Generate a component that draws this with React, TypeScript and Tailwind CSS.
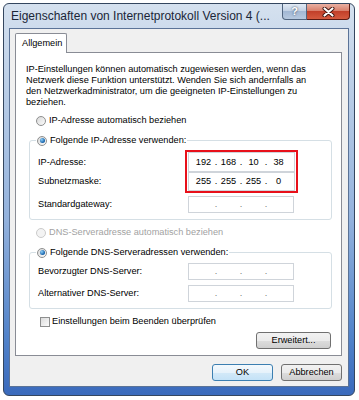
import { Fragment } from 'react';

const font = "font-['Liberation_Sans',Arial,sans-serif]";

function Radio({ checked = false, disabled = false }: { checked?: boolean; disabled?: boolean }) {
  return (
    <span
      className={`flex-shrink-0 w-[10px] h-[10px] rounded-full border flex items-center justify-center ${
        disabled
          ? 'border-[#cbcbcb] bg-[#f3f3f3]'
          : 'border-[#8e8f8f] bg-gradient-to-br from-[#d9d9d9] to-[#fbfbfb]'
      }`}
    >
      {checked && (
        <span className="w-[5px] h-[5px] rounded-full bg-[radial-gradient(circle_at_35%_35%,#8fd0f8,#0f5da8_70%)]" />
      )}
    </span>
  );
}

function Checkbox() {
  return (
    <span className="flex-shrink-0 w-[10px] h-[10px] border border-[#8e8f8f] bg-gradient-to-br from-[#dcdcdc] to-[#fbfbfb]" />
  );
}

function IpField({ parts, className = '' }: { parts?: string[]; className?: string }) {
  return (
    <div className={`flex items-center bg-white border border-[#cfd4da] pl-[4px] ${className}`}>
      {[0, 1, 2, 3].map((i) => (
        <Fragment key={i}>
          <span className="w-[21px] text-center">{parts ? parts[i] : ''}</span>
          {i < 3 && <span className={`w-[4px] text-center ${parts ? '' : 'text-[#777]'}`}>.</span>}
        </Fragment>
      ))}
    </div>
  );
}

function Button({ label, primary = false, className = '' }: { label: string; primary?: boolean; className?: string }) {
  return (
    <button
      className={`h-[17px] rounded-[3px] border flex items-center justify-center text-black ${
        primary
          ? 'border-[#3c7fb1] bg-[linear-gradient(180deg,#f4f9fd_0%,#e6f2fb_50%,#d3e9f8_51%,#c4e2f7_100%)]'
          : 'border-[#707070] bg-[linear-gradient(180deg,#f2f2f2_0%,#ebebeb_50%,#dddddd_51%,#cfcfcf_100%)]'
      } ${className}`}
    >
      {label}
    </button>
  );
}

export default function App() {
  return (
    <div className={`w-[359px] h-[400px] bg-white pt-[3px] pl-[3px] ${font} text-[9.2px] leading-[11px] text-black`}>
      {/* Window frame */}
      <div className="w-[352px] h-[393px] rounded-[6px] border border-[#34465f] bg-[linear-gradient(180deg,#d5e1ef_0%,#bccfe7_20%,#93b2dd_55%,#5283ca_85%,#3a6abc_100%)] flex flex-col px-[5px] pb-[8px]">
        {/* Title bar */}
        <div className="h-[24px] flex items-start -mr-[1px]">
          <div className="flex-1 self-center pl-[2px] text-[12px] leading-[14px] text-[#1b2638] whitespace-nowrap">
            Eigenschaften von Internetprotokoll Version 4 (...
          </div>
          <div className="flex">
            <div className="w-[25px] h-[16px] rounded-bl-[4px] border border-t-0 border-[#51657f] bg-[linear-gradient(180deg,#e2eaf4_0%,#c3d2e5_45%,#a3b8d4_50%,#b7c9df_100%)] flex items-center justify-center text-white font-bold text-[11px] leading-none [text-shadow:0_0_2px_#1d2c44]">
              ?
            </div>
            <div className="w-[43px] h-[16px] rounded-br-[4px] border border-t-0 border-l-0 border-[#5a1a12] bg-[linear-gradient(180deg,#eab0a2_0%,#d9806c_45%,#c2402a_50%,#d55a3f_100%)] flex items-center justify-center">
              <svg width="13" height="10" viewBox="0 0 13 10">
                <path d="M2.5 1.5 L10.5 8.5 M10.5 1.5 L2.5 8.5" stroke="#3d120c" strokeWidth="4" strokeLinecap="round" />
                <path d="M2.5 1.5 L10.5 8.5 M10.5 1.5 L2.5 8.5" stroke="#ffffff" strokeWidth="2.2" strokeLinecap="round" />
              </svg>
            </div>
          </div>
        </div>

        {/* Client area */}
        <div className="flex-1 bg-[#f0f0f0] border border-[#5b7397] pt-[4px] pl-[5px] pr-[6px] pb-[4px] flex flex-col">
          {/* Tab strip */}
          <div className="flex">
            <div className="relative z-10 -mb-px h-[20px] w-[52px] bg-white border border-b-0 border-[#898c95] rounded-t-[2px] flex items-center pl-[6px]">
              Allgemein
            </div>
          </div>

          {/* Tab panel */}
          <div className="bg-white border border-[#898c95] flex flex-col pb-[6px]">
            <p className="pt-[11px] pl-[10px] whitespace-nowrap">
              IP-Einstellungen können automatisch zugewiesen werden, wenn das
              <br />
              Netzwerk diese Funktion unterstützt. Wenden Sie sich andernfalls an
              <br />
              den Netzwerkadministrator, um die geeigneten IP-Einstellungen zu
              <br />
              beziehen.
            </p>

            <label className="mt-[6px] ml-[20px] h-[13px] flex items-center gap-[3px]">
              <Radio />
              <span>IP-Adresse automatisch beziehen</span>
            </label>

            <fieldset className="mt-[7px] ml-[13px] mr-[9px] border border-[#d5dfe5] rounded-[3px] pl-[8px] pr-[37px] pb-[6px]">
              <legend className="-ml-[2px] px-[1px] h-[13px] flex items-center gap-[3px]">
                <Radio checked />
                <span>Folgende IP-Adresse verwenden:</span>
              </legend>
              <div className="mt-[3px] flex">
                <div className="flex-1 flex flex-col pt-[2px]">
                  <span className="h-[20px] flex items-center">IP-Adresse:</span>
                  <span className="h-[19px] flex items-center">Subnetzmaske:</span>
                </div>
                <div className="-mr-[4px] border-2 border-[#e8101a] px-[1px] flex flex-col w-[113px]">
                  <IpField parts={['192', '168', '10', '38']} className="h-[20px]" />
                  <IpField parts={['255', '255', '255', '0']} className="h-[19px]" />
                </div>
              </div>
              <div className="mt-[3px] flex items-center">
                <span className="flex-1">Standardgateway:</span>
                <IpField className="h-[17px] w-[106px]" />
              </div>
            </fieldset>

            <label className="mt-[6px] ml-[20px] h-[13px] flex items-center gap-[3px] text-[#a2a2a2]">
              <Radio disabled />
              <span>DNS-Serveradresse automatisch beziehen</span>
            </label>

            <fieldset className="mt-[7px] ml-[13px] mr-[9px] border border-[#d5dfe5] rounded-[3px] pl-[8px] pr-[37px] pb-[6px]">
              <legend className="-ml-[2px] px-[1px] h-[13px] flex items-center gap-[3px]">
                <Radio checked />
                <span>Folgende DNS-Serveradressen verwenden:</span>
              </legend>
              <div className="mt-[4px] flex items-center">
                <span className="flex-1">Bevorzugter DNS-Server:</span>
                <IpField className="h-[17px] w-[106px]" />
              </div>
              <div className="mt-[5px] flex items-center">
                <span className="flex-1">Alternativer DNS-Server:</span>
                <IpField className="h-[17px] w-[106px]" />
              </div>
            </fieldset>

            <label className="mt-[6px] ml-[24px] h-[13px] flex items-center gap-[2px]">
              <Checkbox />
              <span>Einstellungen beim Beenden überprüfen</span>
            </label>

            <div className="mt-[4px] mr-[10px] flex justify-end">
              <Button label="Erweitert..." className="w-[75px]" />
            </div>
          </div>

          {/* Dialog buttons */}
          <div className="mt-[8px] flex justify-end gap-[8px]">
            <Button label="OK" primary className="w-[61px]" />
            <Button label="Abbrechen" className="w-[61px]" />
          </div>
        </div>
      </div>
    </div>
  );
}
